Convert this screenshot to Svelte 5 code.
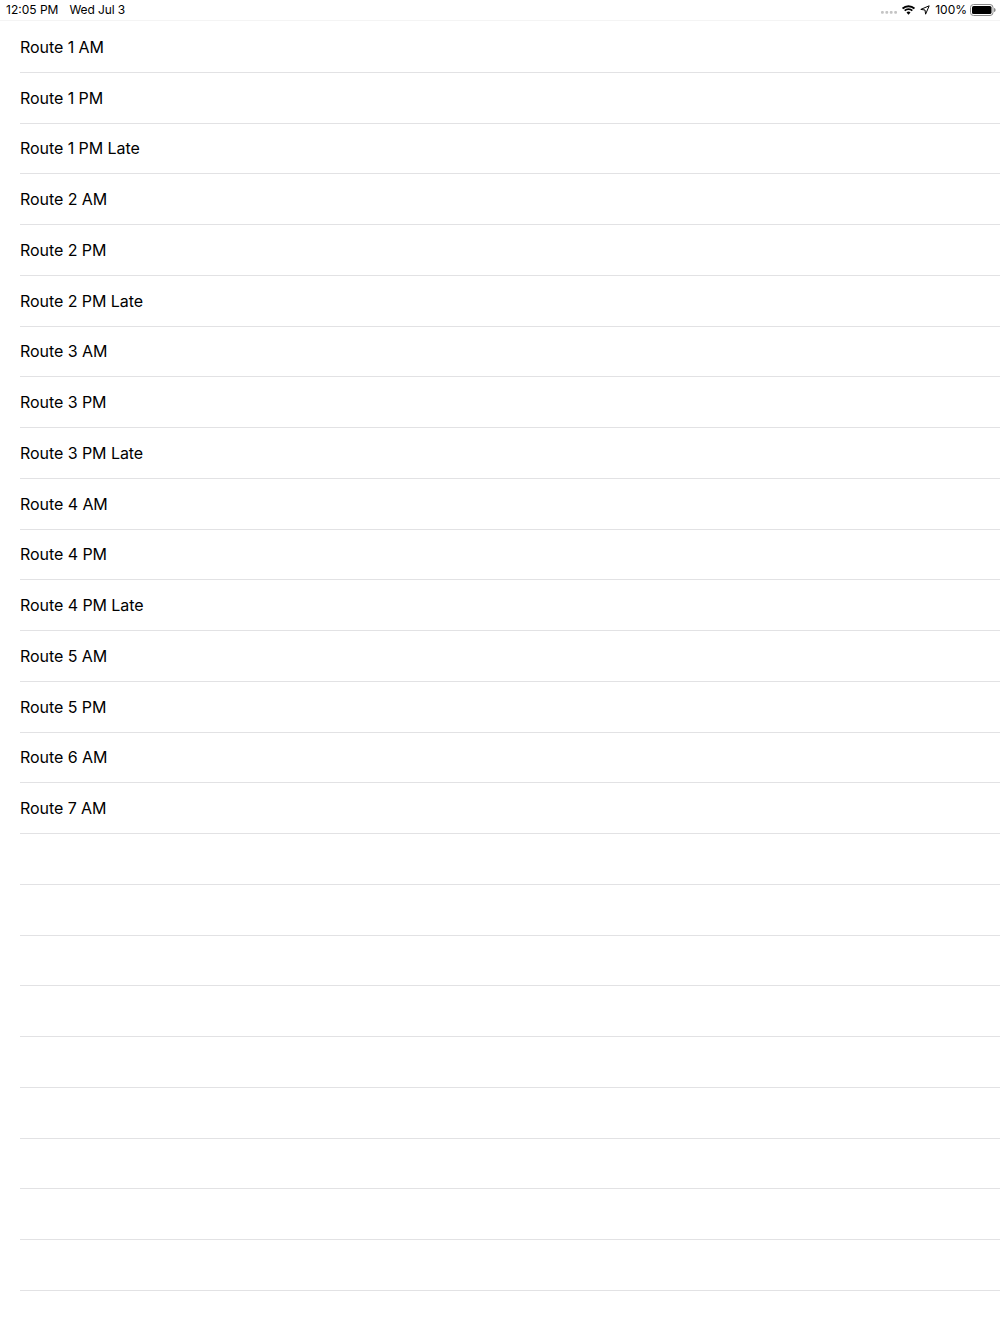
<script>
    const routes = [
        "Route 1 AM", "Route 1 PM", "Route 1 PM Late",
        "Route 2 AM", "Route 2 PM", "Route 2 PM Late",
        "Route 3 AM", "Route 3 PM", "Route 3 PM Late",
        "Route 4 AM", "Route 4 PM", "Route 4 PM Late",
        "Route 5 AM", "Route 5 PM", "Route 6 AM", "Route 7 AM",
    ];
    const emptyRows = Array(9).fill("");
    const rows = [...routes, ...emptyRows];
</script>

<div class="screen">
    <header class="status">
        <div class="clock">
            <span>12:05 PM</span>
            <span class="date">Wed Jul 3</span>
        </div>
        <div class="indicators">
            <svg class="dots" width="16" height="3" viewBox="0 0 16 3">
                <rect x="0" y="0" width="2.8" height="2.8" rx="1" fill="#c4c4c4"/>
                <rect x="4.4" y="0" width="2.8" height="2.8" rx="1" fill="#c4c4c4"/>
                <rect x="8.8" y="0" width="2.8" height="2.8" rx="1" fill="#c4c4c4"/>
                <rect x="13.2" y="0" width="2.8" height="2.8" rx="1" fill="#c4c4c4"/>
            </svg>
            <svg class="wifi" width="13" height="10" viewBox="0 0 13 10">
                <path d="M0.6 3.6 A8.4 8.4 0 0 1 12.4 3.6" fill="none" stroke="#000" stroke-width="1.9"/>
                <path d="M2.7 5.7 A5.4 5.4 0 0 1 10.3 5.7" fill="none" stroke="#000" stroke-width="1.9"/>
                <path d="M4.5 7.6 A2.8 2.8 0 0 1 8.5 7.6 L6.5 9.8 Z" fill="#000"/>
            </svg>
            <svg class="arrow" width="10" height="10" viewBox="0 0 10 10">
                <path d="M9.2 0.8 L0.8 4.4 L5 5 L5.6 9.2 Z" fill="none" stroke="#000" stroke-width="1" stroke-linejoin="round"/>
            </svg>
            <span class="battery-pct">100%</span>
            <svg class="battery" width="26" height="12" viewBox="0 0 26 12">
                <rect x="0.5" y="0.5" width="22.5" height="11" rx="3" fill="none" stroke="#8a8a8a"/>
                <rect x="2" y="2" width="19.5" height="8" rx="1.6" fill="#000"/>
                <path d="M24 4 C25.2 4.3 25.6 5 25.6 6 C25.6 7 25.2 7.7 24 8 Z" fill="#8a8a8a"/>
            </svg>
        </div>
    </header>

    <ul class="list">
        {#each rows as label}
            <li class="row"><span class="label">{label}</span></li>
        {/each}
    </ul>
</div>

<style>
    :global(body) {
        background: #fff;
    }

    .screen {
        width: 1000px;
        height: 1334px;
        overflow: hidden;
        background: #fff;
        color: #000;
        font-family: Inter, "Liberation Sans", sans-serif;
    }

    .status {
        height: 21px;
        box-sizing: border-box;
        padding: 0 4px 1px 6px;
        display: flex;
        align-items: center;
        justify-content: space-between;
        font-size: 12px;
        border-bottom: 1px solid #f4f4f4;
    }

    .clock {
        display: flex;
        gap: 11px;
    }

    .date {
        letter-spacing: -0.1px;
    }

    .indicators {
        display: flex;
        align-items: center;
    }

    .dots {
        margin: 6px 5px 0 0;
    }

    .arrow {
        margin-left: 5px;
    }

    .battery-pct {
        margin-left: 5px;
    }

    .battery {
        margin-left: 3px;
    }

    .list {
        list-style: none;
        margin: 0;
        padding: 1px 0 0 20px;
    }

    .row {
        height: 50.75px;
        box-sizing: border-box;
        display: flex;
        align-items: center;
        border-bottom: 1px solid #e2e2e4;
    }

    .label {
        font-size: 16px;
        letter-spacing: -0.06px;
    }
</style>
